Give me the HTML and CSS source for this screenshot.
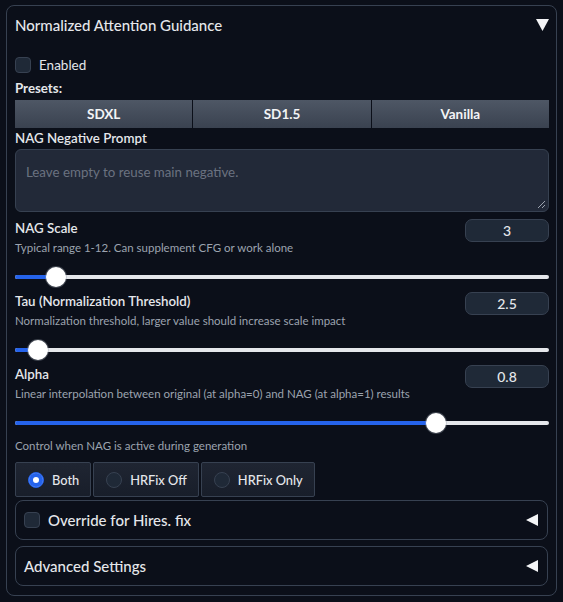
FILE: index.html
```html
<!DOCTYPE html>
<html lang="en">
<head>
<meta charset="utf-8">
<title>Normalized Attention Guidance</title>
<link rel="stylesheet" href="styles.css">
</head>
<body>
<div class="panel">
  <div class="header">
    <span class="title">Normalized Attention Guidance</span>
    <svg class="caret" width="13" height="12" viewBox="0 0 13 12"><polygon points="0,0 13,0 6.5,12" fill="#f3f4f6"/></svg>
  </div>

  <label class="check-row">
    <span class="checkbox"></span>
    <span class="check-label">Enabled</span>
  </label>

  <div class="label bold presets-label">Presets:</div>
  <div class="presets">
    <button class="preset">SDXL</button>
    <button class="preset">SD1.5</button>
    <button class="preset">Vanilla</button>
  </div>

  <div class="label prompt-label">NAG Negative Prompt</div>
  <div class="textarea">
    <span class="placeholder">Leave empty to reuse main negative.</span>
    <svg class="grip" width="9" height="9" viewBox="0 0 9 9"><path d="M1 8 L8 1 M5 8 L8 5" stroke="#9ca3af" stroke-width="1"/></svg>
  </div>

  <div class="setting first">
    <div class="setting-head">
      <div class="setting-text">
        <div class="label">NAG Scale</div>
        <div class="desc">Typical range 1-12. Can supplement CFG or work alone</div>
      </div>
      <div class="numbox">3</div>
    </div>
    <div class="slider"><div class="track"><div class="fill" style="width:7.7%"></div><div class="thumb" style="left:7.7%"></div></div></div>
  </div>

  <div class="setting">
    <div class="setting-head">
      <div class="setting-text">
        <div class="label">Tau (Normalization Threshold)</div>
        <div class="desc">Normalization threshold, larger value should increase scale impact</div>
      </div>
      <div class="numbox">2.5</div>
    </div>
    <div class="slider"><div class="track"><div class="fill" style="width:4.3%"></div><div class="thumb" style="left:4.3%"></div></div></div>
  </div>

  <div class="setting">
    <div class="setting-head">
      <div class="setting-text">
        <div class="label">Alpha</div>
        <div class="desc">Linear interpolation between original (at alpha=0) and NAG (at alpha=1) results</div>
      </div>
      <div class="numbox">0.8</div>
    </div>
    <div class="slider"><div class="track"><div class="fill" style="width:78.8%"></div><div class="thumb" style="left:78.8%"></div></div></div>
  </div>

  <div class="desc control-desc">Control when NAG is active during generation</div>
  <div class="radios">
    <label class="radio selected"><span class="dot"></span>Both</label>
    <label class="radio"><span class="dot"></span>HRFix Off</label>
    <label class="radio"><span class="dot"></span>HRFix Only</label>
  </div>

  <div class="accordion override">
    <span class="checkbox"></span>
    <span class="acc-title">Override for Hires. fix</span>
    <svg class="acc-caret" width="12" height="12" viewBox="0 0 12 12"><polygon points="12,0 12,12 0,6" fill="#f3f4f6"/></svg>
  </div>
  <div class="accordion advanced">
    <span class="acc-title">Advanced Settings</span>
    <svg class="acc-caret" width="12" height="12" viewBox="0 0 12 12"><polygon points="12,0 12,12 0,6" fill="#f3f4f6"/></svg>
  </div>
</div>
</body>
</html>
```
FILE: styles.css
```css
* { box-sizing: border-box; }
html, body { margin: 0; padding: 0; }
body {
  background: #0b0f19;
  font-family: Lato, "Noto Sans", sans-serif;
  color: #e5e7eb;
  width: 563px;
  height: 602px;
  overflow: hidden;
}
.panel {
  margin: 5px 6px 0 6px;
  height: 591px;
  border: 1px solid #374151;
  border-radius: 8px;
  padding: 0 7px 0 8px;
  display: flex;
  flex-direction: column;
}
.header {
  display: flex;
  align-items: center;
  justify-content: space-between;
  height: 20px;
  margin-top: 9px;
}
.title { font-size: 15px; font-weight: 500; color: #e5e7eb; }
.check-row {
  display: flex;
  align-items: center;
  gap: 8px;
  margin-top: 22px;
  height: 16px;
}
.checkbox {
  width: 16px;
  height: 16px;
  border: 1px solid #374151;
  background: #1f2937;
  border-radius: 4px;
  flex: none;
}
.check-label { font-size: 13.5px; }
.label { font-size: 13.3px; line-height: 18px; font-weight: 600; color: #e5e7eb; }
.bold { font-weight: 700; }
.presets-label { margin-top: 6px; }
.presets {
  display: flex;
  gap: 1px;
  margin-top: 3px;
  height: 28px;
}
.preset {
  flex: 1;
  border: 0;
  background: linear-gradient(#4e5765, #3a4250);
  color: #f3f4f6;
  font-family: inherit;
  font-size: 13.5px;
  font-weight: 700;
  padding: 0;
}
.prompt-label { margin-top: 1px; }
.textarea {
  position: relative;
  margin-top: 2px;
  height: 63px;
  background: #222938;
  border: 1px solid #374151;
  border-radius: 6px;
  padding: 11px 10px;
}
.placeholder { font-size: 13.3px; color: #6b7280; line-height: 18px; }
.grip { position: absolute; right: 2px; bottom: 2px; }
.setting { margin-top: 5px; }
.setting.first { margin-top: 7px; }
.setting-head {
  display: flex;
  justify-content: space-between;
  align-items: flex-start;
}
.desc { font-size: 11.5px; line-height: 16px; color: #9ca3af; margin-top: 3px; }
.numbox {
  width: 84px;
  height: 23px;
  border: 1px solid #374151;
  background: #1f2937;
  border-radius: 7px;
  text-align: center;
  font-size: 14px;
  line-height: 21px;
  font-weight: 500;
  color: #e5e7eb;
  flex: none;
}
.slider {
  height: 20px;
  margin-top: 11px;
  display: flex;
  align-items: center;
}
.track {
  position: relative;
  width: 100%;
  height: 4px;
  background: #e5e7eb;
  border-radius: 2px;
}
.fill {
  height: 4px;
  background: #2563eb;
  border-radius: 2px;
}
.thumb {
  position: absolute;
  top: 50%;
  width: 20px;
  height: 20px;
  margin: -10px 0 0 -10px;
  border-radius: 50%;
  background: #ffffff;
  box-shadow: 0 0 0 1px rgba(156,163,175,0.35);
}
.control-desc { margin-top: 5px; }
.radios {
  display: flex;
  gap: 2px;
  margin-top: 8px;
  height: 35px;
}
.radio {
  display: flex;
  align-items: center;
  gap: 8px;
  padding: 0 11px 0 12px;
  border: 1px solid #374151;
  background: linear-gradient(#1f2532, #181e2a);
  border-radius: 2px;
  font-size: 12.8px;
  font-weight: 500;
  color: #e5e7eb;
}
.dot {
  width: 16px;
  height: 16px;
  border-radius: 50%;
  border: 1px solid #374151;
  background: #1f2937;
  flex: none;
}
.selected .dot {
  background: #2563eb;
  border-color: #2563eb;
  box-shadow: inset 0 0 0 4px #2563eb, inset 0 0 0 8px #ffffff;
}
.accordion {
  display: flex;
  align-items: center;
  border: 1px solid #374151;
  border-radius: 8px;
  padding: 0 9px 0 8px;
  margin-right: 1px;
}
.override { margin-top: 3px; height: 40px; gap: 8px; }
.advanced { margin-top: 6px; height: 40px; }
.acc-title { font-size: 15px; font-weight: 500; color: #e5e7eb; flex: 1; }
```
